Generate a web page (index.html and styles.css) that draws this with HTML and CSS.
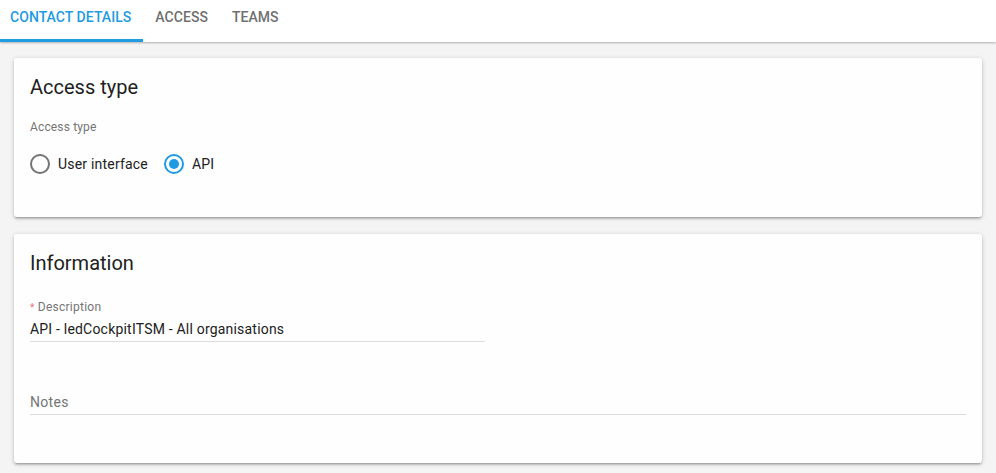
FILE: index.html
```html
<!DOCTYPE html>
<html>
<head>
<meta charset="utf-8">
<link rel="stylesheet" href="styles.css">
</head>
<body>
<nav class="tabs">
  <div class="tab active">Contact details</div>
  <div class="tab">Access</div>
  <div class="tab">Teams</div>
</nav>
<main class="content">
  <section class="card card-access">
    <h2 class="card-title">Access type</h2>
    <div class="group-label">Access type</div>
    <div class="radios">
      <label class="radio"><span class="radio-circle"></span><span class="radio-text">User interface</span></label>
      <label class="radio checked"><span class="radio-circle"></span><span class="radio-text">API</span></label>
    </div>
  </section>
  <section class="card card-info">
    <h2 class="card-title">Information</h2>
    <div class="field field-desc">
      <div class="field-label"><span class="req">*</span> Description</div>
      <div class="field-value">API - ledCockpitITSM - All organisations</div>
    </div>
    <div class="field field-notes">
      <div class="field-placeholder">Notes</div>
    </div>
  </section>
</main>
</body>
</html>
```
FILE: styles.css
```css
* { box-sizing: border-box; }
html, body { margin: 0; padding: 0; }
body {
  background: #f4f4f4;
  font-family: Roboto, "Noto Sans", sans-serif;
  color: #212121;
  width: 996px;
  height: 473px;
  overflow: hidden;
}
.tabs {
  display: flex;
  height: 42px;
  background: #fff;
  box-shadow: 0 1px 2px rgba(0,0,0,0.28);
  position: relative;
  z-index: 1;
}
.tab {
  padding: 0 12px;
  height: 42px;
  line-height: 34px;
  font-size: 14px;
  font-weight: 500;
  letter-spacing: 0.05px;
  text-transform: uppercase;
  color: #707070;
  border-bottom: 3px solid transparent;
}
.tab.active {
  color: #1f9be2;
  border-bottom-color: #1f9be2;
  padding-left: 10px;
}
.content {
  padding: 16px 14px 0;
  display: flex;
  flex-direction: column;
  gap: 17px;
}
.card {
  background: #fefefe;
  border-radius: 3px;
  padding: 16px;
  box-shadow: 0 2px 2px rgba(0,0,0,0.14), 0 3px 1px -2px rgba(0,0,0,0.12), 0 1px 5px rgba(0,0,0,0.18);
}
.card-access { height: 159px; }
.card-info { height: 229px; }
.card-title {
  margin: 0;
  font-size: 20px;
  font-weight: 400;
  line-height: 26px;
  color: #212121;
}
.group-label {
  margin-top: 18px;
  font-size: 12px;
  line-height: 18px;
  letter-spacing: 0.15px;
  color: #757575;
}
.radios {
  margin-top: 18px;
  display: flex;
  align-items: center;
  gap: 16px;
}
.radio {
  display: flex;
  align-items: center;
  gap: 8px;
  font-size: 14px;
  line-height: 20px;
  letter-spacing: 0.2px;
  color: #212121;
}
.radio-circle {
  width: 20px;
  height: 20px;
  border: 2px solid #737373;
  border-radius: 50%;
  display: flex;
  align-items: center;
  justify-content: center;
}
.radio.checked .radio-circle { border-color: #1f9be2; }
.radio.checked .radio-circle::after {
  content: "";
  width: 10px;
  height: 10px;
  border-radius: 50%;
  background: #1f9be2;
}
.field-desc {
  width: 455px;
  margin-top: 23px;
  border-bottom: 1px solid #dcdcdc;
  padding-bottom: 2px;
}
.field-label {
  font-size: 12px;
  line-height: 16px;
  letter-spacing: 0.25px;
  color: #757575;
}
.req { color: #e57373; font-size: 10px; }
.field-value {
  margin-top: 3px;
  font-size: 14px;
  line-height: 20px;
  letter-spacing: 0.2px;
  color: #212121;
}
.field-notes {
  margin-top: 50px;
  border-bottom: 1px solid #dcdcdc;
  padding-bottom: 2px;
}
.field-placeholder {
  font-size: 14px;
  line-height: 20px;
  letter-spacing: 0.3px;
  color: #757575;
}
```
